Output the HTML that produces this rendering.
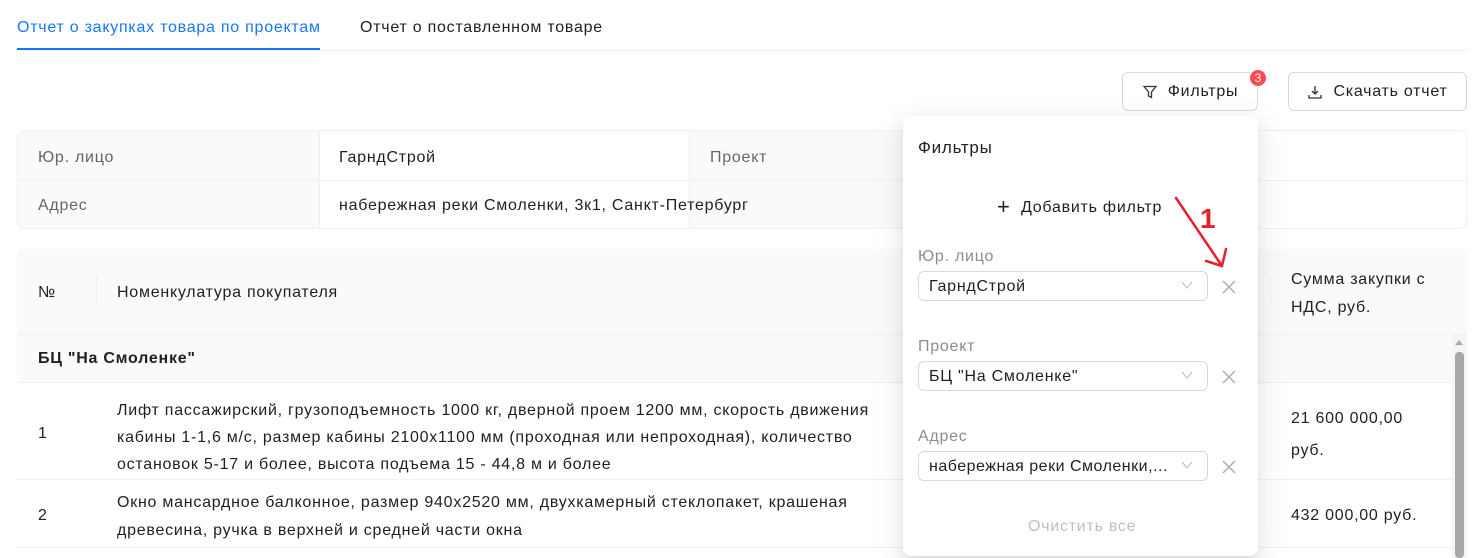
<!DOCTYPE html>
<html><head><meta charset="utf-8"><style>
*{box-sizing:border-box;margin:0;padding:0}
body{width:1476px;height:558px;overflow:hidden;background:#fff;font-family:"Liberation Sans","DejaVu Sans",sans-serif;font-size:16px;letter-spacing:.75px;color:rgba(0,0,0,.88);position:relative}
.a{position:absolute;white-space:nowrap}
.btn{position:absolute;border:1px solid #d9d9d9;border-radius:6px;background:#fff;height:39px;display:flex;align-items:center;justify-content:center;gap:10px}
.lbl{color:#8c8c8c}
.sel{position:absolute;left:918px;width:290px;height:30px;border:1px solid #d9d9d9;border-radius:6px;padding-left:10px;line-height:29px;font-size:16px}
.x{position:absolute;left:1220px;width:18px;height:18px}
.chev{position:absolute;right:14px;top:9px}
</style></head><body>
<div class="a" style="left:17px;top:19px;color:#1677ff">Отчет о закупках товара по проектам</div>
<div class="a" style="left:360px;top:19px">Отчет о поставленном товаре</div>
<div class="a" style="left:17px;top:50px;width:1450px;height:1px;background:#f0f0f0"></div>
<div class="a" style="left:17px;top:48px;width:303px;height:2px;background:#1677ff"></div>

<div class="btn" style="left:1122px;top:72px;width:136px">
<svg width="16" height="16" viewBox="0 0 16 16" fill="none" stroke="#333" stroke-width="1.3"><path d="M2 2.5h12L9.5 8v5.5l-3-1.5V8z"/></svg>Фильтры</div>
<div class="a" style="left:1249px;top:69px;width:18px;height:18px;border-radius:50%;background:#ff4d4f;color:#fff;font-size:12px;letter-spacing:0;text-align:center;line-height:16px;border:1px solid #fff">3</div>
<div class="btn" style="left:1288px;top:72px;width:179px">
<svg width="16" height="16" viewBox="0 0 16 16" fill="none" stroke="#333" stroke-width="1.3"><path d="M8 2v8M5 7l3 3 3-3M2 11v3h12v-3"/></svg>Скачать отчет</div>

<div class="a" style="left:17px;top:130px;width:1450px;height:99px;border:1px solid #f0f0f0;border-radius:8px;overflow:hidden">
<div class="a" style="left:0;top:0;width:302px;height:99px;background:#fafafa"></div>
<div class="a" style="left:671px;top:0;width:302px;height:99px;background:#fafafa"></div>
<div class="a" style="left:301px;top:0;width:1px;height:99px;background:#f0f0f0"></div>
<div class="a" style="left:671px;top:0;width:1px;height:99px;background:#f0f0f0"></div>
<div class="a" style="left:0;top:49px;width:1450px;height:1px;background:#f0f0f0"></div>
<div class="a lbl" style="left:20px;top:18px;color:#666">Юр. лицо</div>
<div class="a" style="left:321px;top:18px">ГарндСтрой</div>
<div class="a lbl" style="left:692px;top:18px;color:#666">Проект</div>
<div class="a lbl" style="left:20px;top:66px;color:#666">Адрес</div>
<div class="a" style="left:321px;top:66px">набережная реки Смоленки, 3к1, Санкт-Петербург</div>
</div>

<div class="a" style="left:17px;top:249px;width:1450px;height:86px;background:#fafafa;border-radius:8px 8px 0 0;border-bottom:1px solid #f0f0f0"></div>
<div class="a" style="left:38px;top:284px">№</div>
<div class="a" style="left:96px;top:276px;width:1px;height:28px;background:#eee"></div>
<div class="a" style="left:117px;top:284px">Номенкулатура покупателя</div>
<div class="a" style="left:1270px;top:278px;width:1px;height:24px;background:#eee"></div>
<div class="a" style="left:1291px;top:266px;line-height:28px">Сумма закупки с<br>НДС, руб.</div>
<div class="a" style="left:17px;top:335px;width:1435px;height:48px;background:#fafafa;border-bottom:1px solid #f0f0f0"></div>
<div class="a" style="left:38px;top:350px;font-weight:bold">БЦ "На Смоленке"</div>
<div class="a" style="left:17px;top:479px;width:1435px;height:1px;background:#f0f0f0"></div>
<div class="a" style="left:17px;top:547px;width:1435px;height:1px;background:#f0f0f0"></div>
<div class="a" style="left:38px;top:425px">1</div>
<div class="a" style="left:117px;top:397px;line-height:27px">Лифт пассажирский, грузоподъемность 1000 кг, дверной проем 1200 мм, скорость движения<br>кабины 1-1,6 м/с, размер кабины 2100х1100 мм (проходная или непроходная), количество<br>остановок 5-17 и более, высота подъема 15 - 44,8 м и более</div>
<div class="a" style="left:1291px;top:403px;line-height:32px">21 600 000,00<br>руб.</div>
<div class="a" style="left:38px;top:507px">2</div>
<div class="a" style="left:117px;top:489px;line-height:28px">Окно мансардное балконное, размер 940х2520 мм, двухкамерный стеклопакет, крашеная<br>древесина, ручка в верхней и средней части окна</div>
<div class="a" style="left:1291px;top:507px">432 000,00 руб.</div>
<div class="a" style="left:1452px;top:335px;width:15px;height:223px;background:#f5f5f5"></div>
<div class="a" style="left:1455px;top:352px;width:9px;height:206px;background:#a8a8a8;border-radius:4px"></div>
<div class="a" style="left:1455px;top:340px;width:0;height:0;border-left:4px solid transparent;border-right:4px solid transparent;border-bottom:5px solid #a8a8a8"></div>

<div class="a" style="left:903px;top:116px;width:355px;height:440px;background:#fff;border-radius:8px;box-shadow:0 6px 16px rgba(0,0,0,.08),0 3px 6px -4px rgba(0,0,0,.12),0 9px 28px 8px rgba(0,0,0,.05)"></div>
<div class="a" style="left:918px;top:138px;font-size:17px">Фильтры</div>
<div class="a" style="left:997px;top:192px"><span style="font-size:22px;position:relative;top:2px">+</span>&nbsp; Добавить фильтр</div>
<div class="a lbl" style="left:918px;top:248px">Юр. лицо</div>
<div class="sel" style="top:271px">ГарндСтрой<svg class="chev" width="12" height="8" viewBox="0 0 12 8" fill="none" stroke="#bbb"><path d="M1 1l5 6 5-6"/></svg></div>
<svg class="x" style="top:278px" viewBox="0 0 18 18" stroke="#aaa" stroke-width="1.4"><path d="M3 3l12 12M15 3L3 15"/></svg>
<div class="a lbl" style="left:918px;top:338px">Проект</div>
<div class="sel" style="top:361px">БЦ "На Смоленке"<svg class="chev" width="12" height="8" viewBox="0 0 12 8" fill="none" stroke="#bbb"><path d="M1 1l5 6 5-6"/></svg></div>
<svg class="x" style="top:368px" viewBox="0 0 18 18" stroke="#aaa" stroke-width="1.4"><path d="M3 3l12 12M15 3L3 15"/></svg>
<div class="a lbl" style="left:918px;top:428px">Адрес</div>
<div class="sel" style="top:451px;letter-spacing:.5px">набережная реки Смоленки,...<svg class="chev" width="12" height="8" viewBox="0 0 12 8" fill="none" stroke="#bbb"><path d="M1 1l5 6 5-6"/></svg></div>
<svg class="x" style="top:458px" viewBox="0 0 18 18" stroke="#aaa" stroke-width="1.4"><path d="M3 3l12 12M15 3L3 15"/></svg>
<div class="a" style="left:1028px;top:518px;color:#bfbfbf">Очистить все</div>

<svg class="a" style="left:1170px;top:190px" width="70" height="85" viewBox="0 0 70 85" fill="none" stroke="#e8202a" stroke-width="2.5" stroke-linecap="round"><path d="M6 8L52 76M36 71l16 5 4-17"/></svg>
<div class="a" style="left:1200px;top:203px;color:#e8202a;font-weight:bold;font-size:28px">1</div>
</body></html>
